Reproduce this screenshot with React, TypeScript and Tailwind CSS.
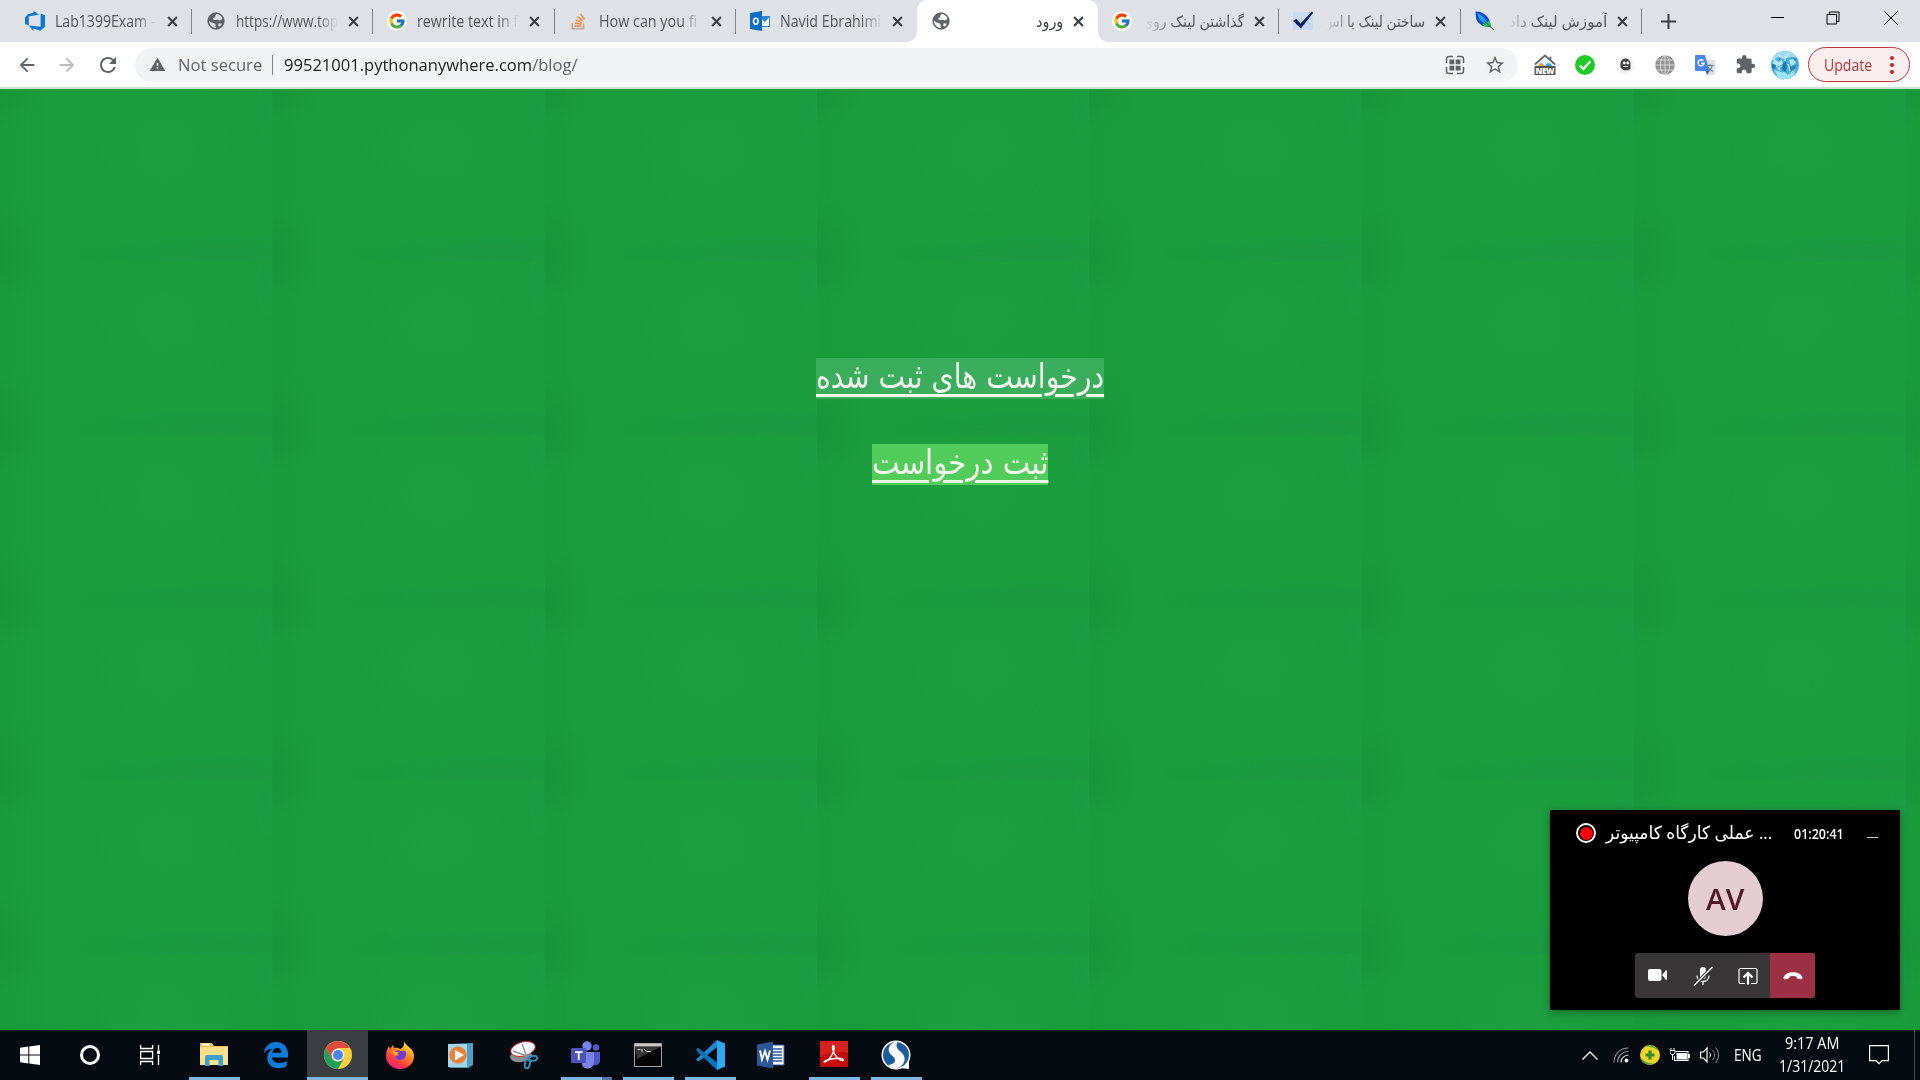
import { useLayoutEffect, useRef, useState, type ReactNode } from "react";
import { FcGoogle } from "react-icons/fc";
import { MdExtension, MdStarBorder, MdRefresh, MdArrowBack, MdArrowForward, MdWarning } from "react-icons/md";

/** Single line of text stretched horizontally to an exact width. */
function Fit({ w, rtl, className = "", children }: { w: number; rtl?: boolean; className?: string; children: ReactNode }) {
  const ref = useRef<HTMLSpanElement>(null);
  const [s, setS] = useState(1);
  useLayoutEffect(() => {
    if (ref.current) setS(w / ref.current.offsetWidth);
  }, [w]);
  return (
    <span className="block shrink-0" style={{ width: w }} dir="ltr">
      <span
        ref={ref}
        dir={rtl ? "rtl" : "ltr"}
        className={"inline-block origin-left whitespace-nowrap align-top " + className}
        style={{ transform: `scaleX(${s})` }}
      >
        {children}
      </span>
    </span>
  );
}

const GlobeIcon = ({ land = "#dee1e6" }: { land?: string }) => (
  <svg viewBox="0 0 20 20" className="size-[18px]">
    <circle cx="10" cy="10" r="9.600" fill="#5f6368" />
    <path d="M10.500 2.200c2.800.1 5.300 2 6.500 4.200l-1 2.600-2.500.4-1.500-1.200-2 .8-2.600-.2-.6-2.200 2.200-.8.300-1.800z" fill={land} />
    <path d="M2.200 9.500l2.600 2.200 3 .6 2 1.800-.6 1.700 1 2c-4 .4-8-3.300-8-8.300z" fill={land} />
    <path d="M13 12.500l3.600.5-2.200 3-2-.8z" fill={land} />
  </svg>
);
const GIcon = () => (
  <span className="flex size-5 items-center justify-center rounded-full bg-white">
    <FcGoogle className="size-[18px]" />
  </span>
);
const DevOps = () => (
  <svg viewBox="0 0 20 20" className="size-5">
    <path d="M0 6.500L2.500 3.500 8.500 1.500V0l5.600 3.400L3.800 5.400v9L0 13z" fill="#0f78d4" />
    <path d="M20 4.200v11.600l-4.600 4-7-2.300V20l-4.600-5.500 11.800 1.300V3L15.600 2.500z" fill="#0f78d4" />
  </svg>
);
const Stack = () => (
  <svg viewBox="0 0 20 20" className="size-[18px]" fill="none">
    <path d="M2.500 12.500v6h12.500v-6" stroke="#bcaa9f" strokeWidth="1.800" />
    <path d="M5 15.600h7.600M5.200 12.300l7.400 1.300M6.200 8.700l6.900 3.100M8.300 5.200l5.700 4.700M11.800 2.200l4.300 6" stroke="#f0883e" strokeWidth="1.700" />
  </svg>
);
const Outlook = () => (
  <svg viewBox="0 0 20 20" className="size-5">
    <path d="M10 5h10v11H10z" fill="#2f86d6" />
    <path d="M11 7.500l4 3.500 4-4.500V15h-8z" fill="#fff" />
    <path d="M0 2l12-2v20L0 18z" fill="#0c6fc6" />
    <ellipse cx="5.800" cy="10.200" rx="2.300" ry="2.900" fill="none" stroke="#fff" strokeWidth="1.600" />
  </svg>
);
const Check = () => (
  <svg viewBox="0 0 20 20" className="size-5">
    <path d="M0 1h20v18H0z" fill="#c9daf4" />
    <path d="M0 10l3.500-2L7.500 12.500 19 .5 20 2 8 17.500z" fill="#0a1f63" />
  </svg>
);
const Feather = () => (
  <svg viewBox="0 0 20 20" className="size-5">
    <path d="M.5.5C6 0 12 3.500 14.500 9.500l1.500 6C8 17 2 12 1 7z" fill="#1747d6" />
    <path d="M2.500 2.500C7 4 11 8 13 13 7 12 3 8 2.500 2.500z" fill="#19a9f0" />
    <path d="M7.500 13c4-1 6-3 7-3L16 15.500C12 16.500 9 15.500 7.500 13z" fill="#1fc443" />
    <path d="M9 10l10 9" stroke="#3b5b3c" strokeWidth="1" />
  </svg>
);

type TabInfo = { icon: ReactNode; title: string; w: number; rtl?: boolean; active?: boolean; sep?: boolean };
const tabs: TabInfo[] = [
  { icon: <DevOps />, title: "Lab1399Exam -", w: 100, sep: true },
  { icon: <GlobeIcon />, title: "https://www.top", w: 102, sep: true },
  { icon: <GIcon />, title: "rewrite text in f", w: 101, sep: true },
  { icon: <Stack />, title: "How can you fi", w: 98, sep: true },
  { icon: <Outlook />, title: "Navid Ebrahimi", w: 101 },
  { icon: <GlobeIcon land="#fff" />, title: "ورود", w: 27, rtl: true, active: true },
  { icon: <GIcon />, title: "گذاشتن لینک روی", w: 102, rtl: true, sep: true },
  { icon: <Check />, title: "ساختن لینک با اس", w: 102, rtl: true, sep: true },
  { icon: <Feather />, title: "آموزش لینک داد", w: 98, rtl: true, sep: true },
];

function Tab({ t }: { t: TabInfo }) {
  return (
    <div className={"relative flex h-[42px] w-[181.200px] shrink-0 items-center " + (t.active ? "rounded-t-[10px] bg-white" : "")}>
      {t.active && (
        <>
          <span className="absolute bottom-0 -left-[10px] size-[10px] bg-[radial-gradient(circle_at_0_0,transparent_9.5px,white_10px)]" />
          <span className="absolute bottom-0 -right-[10px] size-[10px] bg-[radial-gradient(circle_at_100%_0,transparent_9.5px,white_10px)]" />
        </>
      )}
      <span className="ml-[14px] flex w-5 justify-center">{t.icon}</span>
      <span
        className={
          "ml-[10px] flex h-7 w-[102px] items-center text-[15.500px] leading-7 " +
          (t.active ? "justify-end text-[#3c4043]" : t.rtl
            ? "justify-end text-[#54585c] [mask-image:linear-gradient(to_left,black_68%,transparent_97%)]"
            : "text-[#54585c] [mask-image:linear-gradient(to_right,black_80%,transparent)]")
        }
      >
        <Fit w={t.w} rtl={t.rtl}>{t.title}</Fit>
      </span>
      <svg viewBox="0 0 10 10" className="ml-[10px] size-[11px]">
        <path d="M1 1l8 8M9 1l-8 8" stroke="#3c4043" strokeWidth="1.900" />
      </svg>
      {t.sep && <span className="absolute top-[9px] right-0 h-[25px] w-px bg-[#80868b]" />}
    </div>
  );
}

function Chrome() {
  return (
    <header className="h-[89px] bg-white">
      <div className="flex h-[42px] items-center bg-[#dee1e6] pl-[11px]">
        {tabs.map((t, i) => <Tab key={i} t={t} />)}
        <svg viewBox="0 0 14 14" className="ml-[19px] size-[15px]"><path d="M7 0v14M0 7h14" stroke="#3c4043" strokeWidth="1.900" /></svg>
        <div className="ml-auto flex h-9 items-center self-start">
          <svg viewBox="0 0 14 14" className="mr-[42px] size-[14px]"><path d="M1 6.500h13" stroke="#000" /></svg>
          <svg viewBox="0 0 14 14" className="mr-[44px] size-[14px]" fill="none" stroke="#000"><path d="M1 3.500h9.500V13H1zM3.500 3.500V1H13v9.500h-2.500" /></svg>
          <svg viewBox="0 0 14 14" className="mr-[22px] size-[14px]" stroke="#000"><path d="M.5.5l13 13M13.500.5l-13 13" /></svg>
        </div>
      </div>
      <div className="flex h-[45px] items-center text-[#5f6368]">
        <MdArrowBack className="ml-[16px] size-[22px]" />
        <MdArrowForward className="ml-[18px] size-[22px] text-[#babcbe]" />
        <MdRefresh className="ml-[18px] size-6" />
        <div className="ml-[15px] flex h-[34px] w-[1383px] shrink-0 items-center rounded-full bg-[#f1f3f4] text-[17px] leading-[34px]">
          <MdWarning className="ml-[14px] size-[17px]" />
          <span className="ml-[12px]"><Fit w={84}>Not secure</Fit></span>
          <span className="ml-[10px] h-5 w-px bg-[#80868b]" />
          <span className="ml-[11px]"><Fit w={294}><span className="text-[#202124]">99521001.pythonanywhere.com</span>/blog/</Fit></span>
          <svg viewBox="0 0 20 20" className="ml-auto size-5" fill="none" stroke="#5f6368" strokeWidth="1.500">
            <path d="M1.500 8V4a2.500 2.500 0 012.500-2.500h4M12 1.500h4A2.500 2.500 0 0118.500 4v4M18.500 12v4a2.500 2.500 0 01-2.500 2.500h-4M8 18.500H4A2.500 2.500 0 011.500 16v-4" />
            <path d="M4.500 4.500h4.800v4.800H4.500zM10.700 4.500h4.800v4.800h-4.800zM4.500 10.700h4.800v4.800H4.500zM10.700 10.700h4.800v4.800h-4.800z" fill="#5f6368" stroke="none" />
          </svg>
          <MdStarBorder className="mr-[12px] ml-[19px] size-[22px]" />
        </div>
        <div className="ml-[7px] flex items-center">
          <span className="flex w-10 justify-center">
            <svg viewBox="0 0 22 22" className="size-[22px]">
              <path d="M3 9l8-7 8 7v6H3z" fill="#e9f4fd" />
              <path d="M4 13c2-5 4-5 6-2s5-4 9 2z" fill="#f09a24" />
              <path d="M11 13c1-5 5-5 7-1v2h-7z" fill="#3da5df" />
              <path d="M.8 10.500L11 1.500l10.200 9M16.500 2.500v4" fill="none" stroke="#666" strokeWidth="1.700" />
              <path d="M.5 12h21v9H.5z" fill="#555" />
              <text x="11" y="19.600" fontSize="8.200" fontWeight="900" textAnchor="middle" fill="#fff" fontFamily="Open Sans" textLength="19">NEW</text>
            </svg>
          </span>
          <span className="flex w-10 justify-center">
            <svg viewBox="0 0 20 20" className="size-5"><circle cx="10" cy="10" r="10" fill="#1fcb24" /><path d="M4.800 10.500l3.500 3.600 7-7.800" fill="none" stroke="#fff" strokeWidth="2.200" /></svg>
          </span>
          <span className="flex w-10 justify-center">
            <svg viewBox="0 0 20 20" className="size-5"><circle cx="10" cy="10" r="9.500" fill="#f4f4f4" /><path d="M5.500 13V8.500a5 5 0 0110 0V13c0 3-9 3-8 1z" fill="#454545" /><circle cx="9.300" cy="8" r="1.400" fill="#fff" /><circle cx="12.800" cy="8" r="1.400" fill="#fff" /><path d="M8 11.500h5" stroke="#fff" strokeWidth=".8" /></svg>
          </span>
          <span className="flex w-10 justify-center">
            <svg viewBox="0 0 20 20" className="size-5"><circle cx="10" cy="10" r="9.800" fill="#929292" /><g fill="none" stroke="#ddd" strokeWidth=".9"><ellipse cx="10" cy="10" rx="4.500" ry="9.500" /><path d="M10 0v20M0 10h20M2 5h16M2 15h16" /></g></svg>
          </span>
          <span className="flex w-10 justify-center">
            <svg viewBox="0 0 20 20" className="size-5"><path d="M8 5h11a1 1 0 011 1v13a1 1 0 01-1 1h-7z" fill="#dfe1e4" /><path d="M11.500 10.500h7M15 9v1.500M17 11c-.5 3-3 5-5 6M13 12c1 2 3 3.500 5 4.500" stroke="#6b7b86" strokeWidth="1.100" fill="none" /><path d="M1 0h9l4.500 16H1a1 1 0 01-1-1V1a1 1 0 011-1z" fill="#4a86ee" /><path d="M10.800 16h3.700L12 20z" fill="#2a5dc8" /><path d="M8.300 5.800A3 3 0 109 8.300H6.300" fill="none" stroke="#fff" strokeWidth="1.400" /></svg>
          </span>
          <span className="flex w-10 justify-center"><MdExtension className="size-[21px]" /></span>
          <span className="flex w-10 justify-center">
            <svg viewBox="0 0 28 28" className="size-7">
              <defs><clipPath id="av"><circle cx="14" cy="14" r="14" /></clipPath></defs>
              <g clipPath="url(#av)">
                <path d="M0 0h28v28H0z" fill="#49aed8" />
                <path d="M0 0h28v7l-8-1-7 2-7-1-6 4z" fill="#9bdcf2" />
                <path d="M3 8l5 3 3-2 1 4-4 2-6-2zM18 9l5-1 2 4-5 3z" fill="#b4e6f6" />
                <path d="M12 12l3-1 1 6-2 4-3-3zM1 13l4 1-1 4-3-1z" fill="#1b78b4" />
                <path d="M3 19l7 2 6 3 9-4-4 8H8z" fill="#9be3f6" />
                <path d="M19 16l7-2-3 5-4 1zM6 6l4 1-1 2zM21 6l5 2-2 2z" fill="#2484bd" />
                <path d="M7 3l3 4M18 2l-3 5M5 14l4 6M12 21l4 3M20 22l4-4M14 5v5M17 13l2 7M10 15l-3 4" stroke="#eafaff" strokeWidth="1" />
              </g>
            </svg>
          </span>
        </div>
        <div className="ml-[3px] flex h-[35px] w-[102px] shrink-0 items-center rounded-full border border-[#c5343a] bg-[#fbeeee] pl-[15px] text-[15.500px] leading-[34px] text-[#b9333a]">
          <Fit w={48}>Update</Fit>
          <span className="ml-[18px] flex flex-col gap-[3px]">
            <i className="size-[4px] rounded-full bg-[#c5221f]" /><i className="size-[4px] rounded-full bg-[#c5221f]" /><i className="size-[4px] rounded-full bg-[#c5221f]" />
          </span>
        </div>
      </div>
      <div className="h-[2px] bg-[#c4e6cc]" />
    </header>
  );
}

function CallPopup() {
  return (
    <aside dir="ltr" className="absolute right-[20px] bottom-[20px] flex h-[200px] w-[350px] flex-col items-center bg-black text-white shadow-[0_2px_8px_rgba(0,0,0,0.35)]">
      <div className="flex h-[51px] w-full items-center pb-[5px]">
        <span className="ml-[26px] flex size-5 items-center justify-center rounded-full border-2 border-white bg-black">
          <i className="size-[13px] rounded-full bg-[#fb0101]" />
        </span>
        <span className="-mt-[2px] ml-[10px] text-[18px] leading-8"><Fit w={166} rtl>... عملی کارگاه کامپیوتر</Fit></span>
        <span className="mt-[2px] ml-[22px] text-[13.500px] font-semibold"><Fit w={50}>01:20:41</Fit></span>
        <span className="mt-[8px] ml-[23px] h-px w-[11px] bg-[#ccc]" />
      </div>
      <div className="flex size-[75px] items-center justify-center rounded-full bg-[#e6cdd1] text-[29px] font-semibold text-[#4e1a27]">
        <Fit w={38}>AV</Fit>
      </div>
      <div className="mt-[17px] flex h-[45px] w-[180px] overflow-hidden rounded-[3px] bg-[#383637]">
        <span className="flex w-[45px] items-center justify-center"><svg viewBox="0 0 20 14" className="mt-[-1px] h-[14px] w-5" fill="#fff"><rect x="0" y="1" width="13.500" height="12" rx="2" /><path d="M14.500 6.500L18 2h1v10h-1l-3.500-4.500z" /></svg></span>
        <span className="flex w-[45px] items-center justify-center"><svg viewBox="0 0 20 20" className="size-5" fill="none" stroke="#fff" strokeWidth="1.300"><rect x="7" y="1" width="6" height="12" rx="3" fill="#fff" stroke="none" /><path d="M4 9.500c0 4 3 6 6 6s6-2 6-6M10 15.500V19" /><path d="M1.500 19.500L19 1.500" stroke="#383637" strokeWidth="3.500" /><path d="M1 19.500L19.500 1" /></svg></span>
        <span className="flex w-[45px] items-center justify-center"><svg viewBox="0 0 20 18" className="h-[18px] w-5" fill="none" stroke="#fff"><path d="M7 16.500H2.500A1.500 1.500 0 011 15V3a1.500 1.500 0 011.500-1.500h15A1.500 1.500 0 0119 3v12a1.500 1.500 0 01-1.500 1.500H13" strokeWidth="1.200" /><path d="M10 17.500V7M5.500 10.500L10 6l4.500 4.500" strokeWidth="2.200" /></svg></span>
        <span className="flex w-[45px] items-center justify-center bg-[#9b2f43]"><svg viewBox="0 0 20 8" className="h-[8px] w-5"><path d="M.5 5.500C1.500 2 6 .3 10 .3S18.500 2 19.500 5.500c0 1.500-.5 2-1.500 1.800l-3.500-.7c-.8-.2-1-.8-1-2-2-.7-5-.7-7 0 0 1.200-.2 1.800-1 2L2 7.300C1 7.500.5 7 .5 5.500z" fill="#fff" /></svg></span>
      </div>
    </aside>
  );
}

const tileBg =
  "bg-[#1b9d3e] bg-[image:radial-gradient(ellipse_50px_60px_at_0px_165px,#168f3680,transparent),radial-gradient(ellipse_50px_40px_at_0px_0px,#168f3680,transparent),radial-gradient(ellipse_150px_22px_at_220px_164px,#1c964890,transparent),radial-gradient(ellipse_60px_20px_at_110px_168px,#189a3a80,transparent),radial-gradient(ellipse_20px_40px_at_272px_22px,#1c9b4c90,transparent),radial-gradient(ellipse_80px_75px_at_165px_60px,#1fa24370,transparent),linear-gradient(to_right,#18993950,transparent_20%)] bg-[size:272.300px_173px]";

const linkText = "relative -top-[2px] underline decoration-[3px] underline-offset-[6px]";
const arabicFace = { fontFamily: '"DejaVu Sans", "Noto Sans", sans-serif' };

function Page() {
  return (
    <main className={"relative flex h-[941px] flex-col items-center pt-[269px] text-[#f3f6ec] " + tileBg}>
      <a dir="rtl" className="flex h-[41px] items-center bg-[#3aae5c] text-[34px] leading-[41px]">
        <span style={arabicFace}><Fit w={288} rtl className={linkText}>درخواست های ثبت شده</Fit></span>
      </a>
      <a dir="rtl" className="mt-[45px] flex h-[41px] items-center bg-[#52cc5a] text-[34px] leading-[41px]">
        <span style={arabicFace}><Fit w={176} rtl className={linkText}>ثبت درخواست</Fit></span>
      </a>
      <CallPopup />
    </main>
  );
}

const s28 = "size-7";
const apps: { icon: ReactNode; run?: boolean; active?: boolean }[] = [
  { run: true, icon: <svg viewBox="0 0 28 28" className={s28}><path d="M0 2h12l2 3h14v19H0z" fill="#e9bf55" /><path d="M0 6h28v18H0z" fill="#fbe08c" /><path d="M2 2.500h8v2H2z" fill="#fff" /><path d="M5 25V16a2 2 0 012-2h14a2 2 0 012 2v9h-4.500v-6h-9v6z" fill="#3f9fcf" /></svg> },
  { icon: <svg viewBox="0 0 26 28" className={s28}><path d="M.8 12.500C1.800 5.500 6.500 1 13 1c7.500 0 12 5.500 12 12v3.500H9c.3 4 3.500 5.500 7.500 5.500 3 0 5.500-.8 7.200-2v5.300C21.500 26.600 18.500 27.200 15.500 27.200 8.500 27.200 4.300 23 4.300 17c0-4 2-7.500 5.700-9.500C5.500 7.800 2.500 9.500.8 12.500zM9.300 11.800h9.200c0-3-1.500-4.800-4.300-4.800-2.500 0-4.400 1.800-4.900 4.800z" fill="#0b7bd8" /></svg> },
  { run: true, active: true, icon: <svg viewBox="0 0 28 28" className={s28}><circle cx="14" cy="14" r="14" fill="#fdd03b" /><path d="M1.900 7L8 17.500c3 4 9 4 12 0L14 28A14 14 0 011.900 7z" fill="#1fa15d" /><path d="M1.900 7L8 17.500 14 7h12.100A14 14 0 001.900 7z" fill="#dd4b3e" /><circle cx="14" cy="14" r="6.400" fill="#f1f1f1" /><circle cx="14" cy="14" r="5" fill="#4b85ee" /></svg> },
  { icon: <svg viewBox="0 0 28 28" className={s28}><defs><linearGradient id="ff" x1=".8" y1="0" x2=".2" y2="1"><stop offset="0" stopColor="#fff044" /><stop offset=".35" stopColor="#ff9a1f" /><stop offset=".7" stopColor="#ff4040" /><stop offset="1" stopColor="#f0168c" /></linearGradient></defs><path d="M18 0c1 3 4 5 6 7l1.500 1.500C27.500 11 28 13 28 15c0 7.500-6 13-14 13S0 22 0 15c0-4 1-7 3-10l1 3 3-4 1 3c3-.5 4 0 6 1 3-1 5-4 4-8z" fill="url(#ff)" /><path d="M9 10c3-1 5 0 5 0h5c2 2 1 4 1 4-1 6-10 7-11 1 1 1 3 0 4-1z" fill="#6f3ed6" /><path d="M6 10c3 0 4 2 7 1-1 3-4 2-4 4z" fill="#ffb51b" /></svg> },
  { icon: <svg viewBox="0 0 26 26" className="mr-[4px] size-[26px]"><path d="M2 2l24-1v22l-5 3H3z" fill="#4f9fc6" /><path d="M1 2h19v23H1z" fill="#a6d5ea" /><circle cx="11" cy="13" r="8.600" fill="#ee7f34" /><path d="M8 8l9 5-9 5.500z" fill="#fff" /></svg> },
  { icon: <svg viewBox="0 0 28 28" className={s28}><ellipse cx="11" cy="15" rx="11" ry="6" fill="#8d8d8d" transform="rotate(-8 11 15)" /><ellipse cx="13" cy="8" rx="12.500" ry="7" fill="#fff" stroke="#c72a32" transform="rotate(-15 13 8)" /><path d="M12 3l5 13M3 10l14 5" stroke="#8b979c" strokeWidth="1.500" /><g fill="none" stroke="#2e8fbf" strokeWidth="2"><ellipse cx="22.500" cy="17.500" rx="4.500" ry="2.500" transform="rotate(-10 22 17)" /><ellipse cx="17.500" cy="22.500" rx="2.500" ry="4.800" transform="rotate(10 17 22)" /></g></svg> },
  { run: true, icon: <svg viewBox="0 0 30 28" className="h-7 w-[30px]"><circle cx="25" cy="6.500" r="3.200" fill="#5059c9" /><path d="M18 11h11v9a5 5 0 01-7 4z" fill="#5059c9" /><circle cx="16" cy="5" r="4.700" fill="#7b83eb" /><path d="M10 11h13v10c0 8-12 9-12 1z" fill="#7b83eb" /><rect x="0" y="7" width="15" height="15" rx="1.500" fill="#4b53bc" /><path d="M4 11.200h7.500M7.700 11v8" stroke="#fff" strokeWidth="1.800" /></svg> },
  { run: true, icon: <svg viewBox="0 0 28 24" className="h-6 w-7"><path d="M.5.500h27v23H.5z" fill="#050505" stroke="#a6a6a6" /><path d="M1 1h26v2.500H1z" fill="#c9c9c9" /><path d="M1 4h25L3 16z" fill="#4a4a4a" opacity=".7" /><path d="M3.500 6.500h3M8 6v3M10 6l3 2.500h4" stroke="#ddd" /></svg> },
  { run: true, icon: <svg viewBox="0 0 30 30" className="size-[30px]"><path d="M22 0v30l8-3.500v-23z" fill="#2ba7f2" /><path d="M22 0L5 16l-4 3.500 2 2L7 19 22 7z" fill="#1f8ad4" /><path d="M1 9.500l2-1.700L22 22.500V30L4 13.500z" fill="#0c71ba" /></svg> },
  { icon: <svg viewBox="0 0 28 28" className={s28 + " mr-[2px]"}><path d="M15 4h12v20H15z" fill="#fff" stroke="#2b579a" /><path d="M16 8h9M16 11h9M16 14h9M16 17h9M16 20h9" stroke="#2b579a" strokeWidth="1.500" /><path d="M0 3.500L16 .5v27L0 24.500z" fill="#2b5797" /><path d="M3 9.500l2 9 3-8.500 2.500 8.500 2.500-9" fill="none" stroke="#fff" strokeWidth="1.900" /></svg> },
  { run: true, icon: <svg viewBox="0 0 28 26" className="mb-[3px] h-[26px] w-7"><path d="M0 0h28v26H0z" fill="#c40d0a" /><path d="M0 0h28v12C18 9 8 12 0 16z" fill="#e13026" opacity=".6" /><path d="M4.500 21c4-1 11-10 9.500-16-2-2-2 3 0 7s6 8 9 7.500c2-3-9-3-15.500-.5-3 1-4 2-3 2z" fill="none" stroke="#fff" strokeWidth="1.400" /></svg> },
  { run: true, icon: <svg viewBox="0 0 30 30" className="size-[30px]"><circle cx="15" cy="15" r="14.500" fill="#fff" /><path d="M19 28l9 1V17z" fill="#fff" /><circle cx="15" cy="15" r="13" fill="#1d5b9f" /><path d="M17 1C7 3 5 11 11 15.500c5 3.500 4 9-4 9.500 3 3 8 4 12 2 6-4 6-11 1-15-4-3-6-6-3-11z" fill="#fff" /></svg> },
];

function Taskbar() {
  return (
    <footer className="flex h-[50px] items-center bg-[#060b12] text-white">
      <span className="flex w-[60px] justify-center"><svg viewBox="0 0 20 20" className="size-5" fill="#fff"><path d="M0 2.800L8.300 1.600v7.900H0zM9.300 1.500L20 0v9.500H9.300zM0 10.500h8.300v7.900L0 17.200zM9.300 10.500H20V20L9.300 18.500z" /></svg></span>
      <span className="flex w-[60px] justify-center"><i className="size-5 rounded-full border-[3px] border-white" /></span>
      <span className="flex w-[60px] justify-center"><svg viewBox="0 0 20 20" className="size-5" fill="none" stroke="#fff" strokeWidth="1.300"><path d="M.6 0v3.500h12V0M.6 20v-3.500h12V20M.6 6.500h12v7H.6zM18.500 0v5M18.500 10v10" /><path d="M17 5.500h3v3.500h-3z" fill="#fff" stroke="none" /></svg></span>
      <span className="w-[3px]" />
      {apps.map((a, i) => (
        <span key={i} className={"relative flex h-[50px] w-[62px] items-center justify-center pr-px " + (a.active ? "bg-[#3a3d42] bg-clip-content" : "")}>
          {a.icon}
          {a.run && <i className={"absolute bottom-0 h-[3px] bg-[#7fb5e2] " + (a.active ? "right-px left-0" : "right-[5px] left-[6px]")} />}
          {i === 6 && <i className="absolute right-[5px] bottom-0 h-[3px] w-[10px] bg-[#51769a]" />}
        </span>
      ))}
      <div className="ml-auto flex h-full items-center">
        <svg viewBox="0 0 16 9" className="h-[9px] w-4"><path d="M.5 8.500L8 1l7.500 7.500" fill="none" stroke="#fff" strokeWidth="1.300" /></svg>
        <svg viewBox="0 0 16 16" className="ml-[15px] size-4" fill="none"><g stroke="#8b8f94" strokeWidth="1.100"><path d="M1 15.500C1 7 7 1 15.500 1" /><path d="M4.500 15.500c0-6 4.500-11 11-11" /></g><path d="M8 15.500c0-4 3-7.300 7.500-7.500" stroke="#ddd" strokeWidth="1.200" /><circle cx="13.500" cy="13.500" r="1.900" fill="#fff" /></svg>
        <svg viewBox="0 0 20 20" className="ml-[11px] size-5"><circle cx="10" cy="10" r="10" fill="#f1d52c" /><path d="M5 1.500C10-1 17 1 19.500 7 16 3 11 1.500 5 1.500zM.3 12C2 19 9 21.500 15 18.500 9 18.500 4 17 .3 12z" fill="#4aa732" /><path d="M10 5.500v9M5.500 10h9" stroke="#2f8f2f" strokeWidth="3.200" /></svg>
        <svg viewBox="0 0 20 14" className="ml-[10px] h-[14px] w-5"><path d="M5.500 3.500h12.500v9H4.500V8" fill="none" stroke="#fff" strokeWidth="1.100" /><path d="M6.500 5h10.500v6.500H6.500z" fill="#fff" /><path d="M18 6h2v4h-2z" fill="#fff" /><path d="M1 0v2.500M4 0v2.500M2.500 6v6" stroke="#fff" /><path d="M0 2.500h5V5L3.500 6.500h-2L0 5z" fill="#060b12" stroke="#fff" /></svg>
        <svg viewBox="0 0 20 18" className="ml-[10px] h-[18px] w-5" fill="none"><path d="M.6 6v6H3.500L7 16V2L3.500 6z" stroke="#fff" strokeWidth="1.200" /><path d="M9.500 6.500c1.300 1.500 1.300 3.500 0 5" stroke="#fff" /><path d="M12.500 4c2.700 3 2.700 7 0 10M15.500 1.500c4 4.500 4 10.500 0 15" stroke="#8b8f94" /></svg>
        <span className="mt-[1px] ml-[14px] text-[15.500px]"><Fit w={28}>ENG</Fit></span>
        <span className="ml-[17px] flex w-[66px] flex-col items-center text-[15.500px] leading-[23px]"><Fit w={54}>9:17 AM</Fit><Fit w={66}>1/31/2021</Fit></span>
        <svg viewBox="0 0 20 20" className="ml-[24px] size-5" fill="none" stroke="#fff" strokeWidth="1.200"><path d="M.6.600h18.800v15H13L10 18.600 7 15.600H.6z" /></svg>
        <span className="ml-[25px] h-full w-px bg-[#4a4e54]" />
        <span className="w-[5px]" />
      </div>
    </footer>
  );
}

export default function App() {
  return (
    <div className="h-[1080px] w-[1920px] overflow-hidden" style={{ fontFamily: '"Open Sans", "Noto Sans", "DejaVu Sans", sans-serif' }}>
      <Chrome />
      <Page />
      <Taskbar />
    </div>
  );
}
